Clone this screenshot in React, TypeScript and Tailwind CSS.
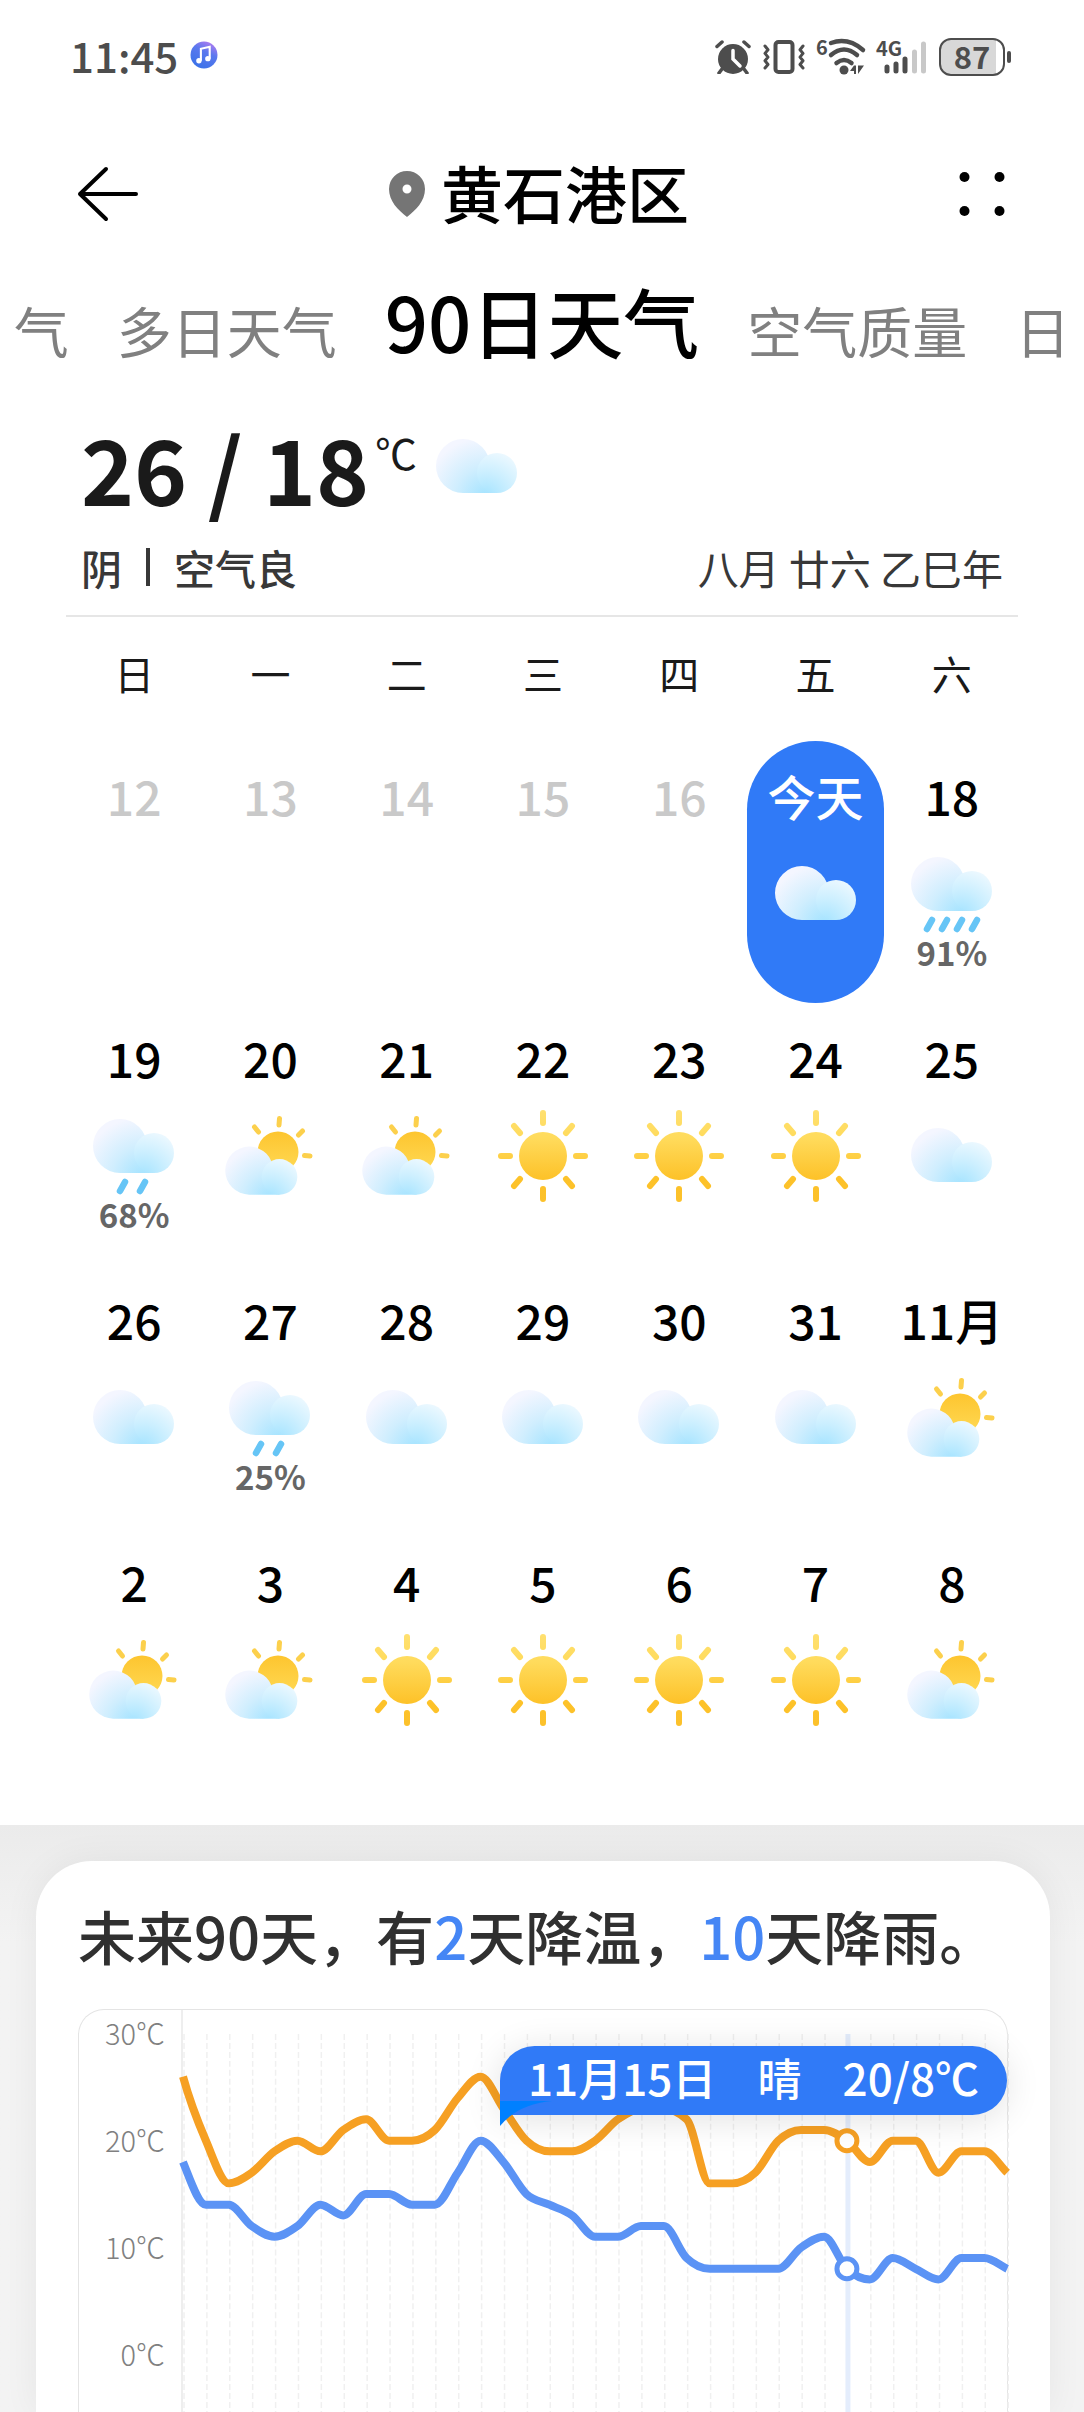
import { useId } from "react";

type Weather = "cloud" | "rain2" | "rain4" | "partly" | "sun";

interface Day {
  label: string;
  weather?: Weather;
  chance?: string;
  today?: boolean;
}

const weekdays = ["日", "一", "二", "三", "四", "五", "六"];

const weeks: Day[][] = [
  [
    { label: "12" },
    { label: "13" },
    { label: "14" },
    { label: "15" },
    { label: "16" },
    { label: "今天", weather: "cloud", today: true },
    { label: "18", weather: "rain4", chance: "91%" },
  ],
  [
    { label: "19", weather: "rain2", chance: "68%" },
    { label: "20", weather: "partly" },
    { label: "21", weather: "partly" },
    { label: "22", weather: "sun" },
    { label: "23", weather: "sun" },
    { label: "24", weather: "sun" },
    { label: "25", weather: "cloud" },
  ],
  [
    { label: "26", weather: "cloud" },
    { label: "27", weather: "rain2", chance: "25%" },
    { label: "28", weather: "cloud" },
    { label: "29", weather: "cloud" },
    { label: "30", weather: "cloud" },
    { label: "31", weather: "cloud" },
    { label: "11月", weather: "partly" },
  ],
  [
    { label: "2", weather: "partly" },
    { label: "3", weather: "partly" },
    { label: "4", weather: "sun" },
    { label: "5", weather: "sun" },
    { label: "6", weather: "sun" },
    { label: "7", weather: "sun" },
    { label: "8", weather: "partly" },
  ],
];

const highs = [
  26, 20, 16, 17, 19, 20, 19, 21, 22, 20, 20, 21, 24, 26, 23, 20, 19, 19, 20, 22, 23, 23, 22, 16, 16, 17, 20, 21, 21,
  20, 18, 20, 20, 17, 19, 19, 17,
];
const lows = [
  18, 14, 14, 12, 11, 12, 14, 13, 15, 15, 14, 14, 17, 20, 18, 15, 14, 13, 11, 11, 12, 12, 9, 8, 8, 8, 8, 10, 11, 8, 7,
  9, 8, 7, 9, 9, 8,
];
const selectedDay = 29;

/* Cloud in a 96-unit box, 81 wide and 54 tall. */
function CloudShape() {
  const id = useId().replace(/[^a-zA-Z0-9]/g, "");
  return (
    <g>
      <defs>
        <radialGradient id={`${id}b`} gradientUnits="userSpaceOnUse" cx="56" cy="80" r="60">
          <stop offset="0" stopColor="#a3e3ff" />
          <stop offset="0.5" stopColor="#d0eefe" />
          <stop offset="1" stopColor="#f4f6ff" />
        </radialGradient>
        <radialGradient id={`${id}s`} gradientUnits="userSpaceOnUse" cx="57" cy="80" r="46">
          <stop offset="0" stopColor="#a3e3ff" />
          <stop offset="0.55" stopColor="#ccefff" />
          <stop offset="1" stopColor="#ebf8ff" />
        </radialGradient>
      </defs>
      <path d="M34 22a27 27 0 0 1 27 27v7h7v20H34a27 27 0 0 1 0-54Z" fill={`url(#${id}b)`} />
      <circle cx="68" cy="56" r="20" fill={`url(#${id}s)`} />
    </g>
  );
}

function SunShape() {
  const id = useId().replace(/[^a-zA-Z0-9]/g, "");
  return (
    <g>
      <defs>
        <linearGradient id={id} gradientUnits="userSpaceOnUse" x1="0" y1="4" x2="0" y2="96">
          <stop offset="0" stopColor="#ffe070" />
          <stop offset="0.3" stopColor="#ffdb5c" />
          <stop offset="0.75" stopColor="#fdc229" />
          <stop offset="1" stopColor="#fcc12b" />
        </linearGradient>
      </defs>
      <circle cx="48" cy="50" r="24" fill={`url(#${id})`} />
      <path
        d="M45 7a3 3 0 0 1 6 0v10a3 3 0 0 1-6 0ZM45 83a3 3 0 0 1 6 0v10a3 3 0 0 1-6 0ZM6 47h9a3 3 0 0 1 0 6H6a3 3 0 0 1 0-6ZM81 47h9a3 3 0 0 1 0 6h-9a3 3 0 0 1 0-6Z"
        fill={`url(#${id})`}
      />
      <path
        d="m19 20 6 7M77 20l-6 7M19 80l6-7M77 80l-6-7"
        fill="none"
        stroke={`url(#${id})`}
        strokeWidth="6"
        strokeLinecap="round"
      />
    </g>
  );
}

function PartlyShape() {
  const id = useId().replace(/[^a-zA-Z0-9]/g, "");
  return (
    <g>
      <defs>
        <linearGradient id={id} x1="0" y1="0" x2="0" y2="1">
          <stop offset="0" stopColor="#fdc52f" />
          <stop offset="1" stopColor="#ffda55" />
        </linearGradient>
      </defs>
      <circle cx="56" cy="46" r="20.500" fill={`url(#${id})`} />
      <path
        d="M57.500 12.500 57 19M32.500 21l4 5M80.500 25l-4 4M82.500 49.500l5.500.5"
        fill="none"
        stroke="#fcd04c"
        strokeWidth="5"
        strokeLinecap="round"
      />
      <g transform="translate(-3 21) scale(.89)">
        <CloudShape />
      </g>
    </g>
  );
}

function WeatherIcon({ kind }: { kind: Weather }) {
  return (
    <svg viewBox="0 0 96 96" className="h-24 w-24" aria-hidden="true">
      {kind === "cloud" && <CloudShape />}
      {kind === "sun" && <SunShape />}
      {kind === "partly" && <PartlyShape />}
      {(kind === "rain2" || kind === "rain4") && (
        <g>
          <g transform="translate(0 -9)">
            <CloudShape />
          </g>
          <path
            d={kind === "rain2" ? "m39 76-5 9M59 76l-5 9" : "m28 76-5 9M43 76l-5 9M58 76l-5 9M73 76l-5 9"}
            fill="none"
            stroke="#66c5f6"
            strokeWidth="6.500"
            strokeLinecap="round"
          />
        </g>
      )}
    </svg>
  );
}

function StatusBar() {
  return (
    <div className="flex h-[114px] items-center justify-between pl-[70px] pr-[73px] text-[#4d4d4d]">
      <div className="flex items-center gap-3 pb-1">
        <span className="text-[42px] font-medium leading-none">11:45</span>
        <svg viewBox="0 0 27 27" className="h-7 w-7" aria-hidden="true">
          <defs>
            <linearGradient id="music" x1="0.800" y1="0" x2="0.300" y2="1">
              <stop offset="0" stopColor="#b57cf0" />
              <stop offset="0.400" stopColor="#5a78ee" />
              <stop offset="1" stopColor="#3a72e8" />
            </linearGradient>
          </defs>
          <circle cx="13.500" cy="13.500" r="13" fill="url(#music)" />
          <path d="M10.500 19V7.500l8.500-2V17" fill="none" stroke="#fff" strokeWidth="2" />
          <circle cx="8.600" cy="19" r="2.600" fill="#fff" />
          <circle cx="17.200" cy="17" r="2.600" fill="#fff" />
        </svg>
      </div>
      <div className="flex items-center gap-3">
        <svg viewBox="0 0 36 34" className="h-[34px] w-9" fill="none" stroke="currentColor" strokeLinecap="round" aria-hidden="true">
          <circle cx="18" cy="19" r="15" fill="currentColor" stroke="none" />
          <path d="M2 6.500 7 2M34 6.500 29 2M7 29l-3 4M29 29l3 4" strokeWidth="3.500" />
          <path d="M18 10.500V19l7 7" stroke="#fff" strokeWidth="3.500" />
        </svg>
        <svg viewBox="0 0 42 34" className="h-[34px] w-[42px]" fill="none" stroke="currentColor" strokeLinecap="round" strokeLinejoin="round" aria-hidden="true">
          <rect x="12.500" y="2" width="17" height="30" rx="3" strokeWidth="4" />
          <path d="m2 6 3 3.700-3 3.700 3 3.700-3 3.700 3 3.700-3 3.500M40 6l-3 3.700 3 3.700-3 3.700 3 3.700-3 3.700 3 3.500" strokeWidth="3" />
        </svg>
        <svg viewBox="0 0 48 36" className="h-9 w-12 overflow-visible" fill="none" stroke="currentColor" strokeLinecap="round" aria-hidden="true">
          <text x="-1" y="16" fontSize="20" fontWeight="700" fill="currentColor" stroke="none">
            6
          </text>
          <path d="M14 4q17-6 32 7M14 16q13-11 26 0M19.500 24q7.500-6 15 0" strokeWidth="4.500" />
          <circle cx="27" cy="31" r="4.500" fill="currentColor" stroke="none" />
          <path d="M33 32h4v-5.500ZM37 26.500h2V35h-2ZM41 26.500V35l6-8.500Z" fill="currentColor" stroke="none" />
        </svg>
        <svg viewBox="0 0 50 36" className="h-9 w-[50px] overflow-visible" fill="none" strokeWidth="5" strokeLinecap="round" aria-hidden="true">
          <text x="-1" y="17" fontSize="20" fontWeight="700" fill="currentColor">
            4G
          </text>
          <path d="M10 28v4M19 25v7M28 20v12" stroke="currentColor" />
          <path d="M37.500 13v19M46.500 5v27" stroke="#c8c8c8" />
        </svg>
        <div className="flex items-center gap-0.5">
          <div className="flex h-[38px] w-[66px] items-center justify-center rounded-xl border-2 border-current bg-linear-to-r from-[#d8d8d8] from-88% to-white to-88% pb-1 text-[31px] font-bold leading-none">
            87
          </div>
          <div className="h-3 w-1 rounded bg-current" />
        </div>
      </div>
    </div>
  );
}

function Header() {
  return (
    <header className="flex h-40 items-center justify-between pl-[76px] pr-[74px]">
      <button type="button" aria-label="返回" className="flex w-20 justify-start">
        <svg viewBox="0 0 64 56" className="h-14 w-16" fill="none" stroke="#000" strokeWidth="4" strokeLinecap="round" strokeLinejoin="round">
          <path d="M30 3 4 28l26 25M4 28h56" />
        </svg>
      </button>
      <h1 className="flex items-center gap-4 text-[62px] font-medium leading-none text-black">
        <svg viewBox="0 0 36 46" className="h-[46px] w-9" aria-hidden="true">
          <path fill="#757575" fillRule="evenodd" d="M18 0a18 18 0 0 1 18 18c0 12-9 21-18 28C9 39 0 30 0 18A18 18 0 0 1 18 0Zm0 13.500a4.500 4.500 0 1 0 0 9 4.500 4.500 0 0 0 0-9Z" />
        </svg>
        <span className="pb-1">黄石港区</span>
      </h1>
      <button type="button" aria-label="更多" className="flex w-22 justify-end">
        <svg viewBox="0 0 56 56" className="h-14 w-14">
          <circle cx="10.500" cy="11" r="5" />
          <circle cx="45.500" cy="11" r="5" />
          <circle cx="10.500" cy="45" r="5" />
          <circle cx="45.500" cy="45" r="5" />
        </svg>
      </button>
    </header>
  );
}

function Tabs() {
  const tab = "shrink-0 text-[55px] font-normal text-[#808080]";
  return (
    <nav className="-mt-2.5 flex items-baseline justify-center gap-12 whitespace-nowrap leading-[112px]">
      <button type="button" className={tab}>气</button>
      <button type="button" className={tab}>多日天气</button>
      <button type="button" aria-current="page" className="shrink-0 text-[76px] font-medium text-black">
        90日天气
      </button>
      <button type="button" className={tab}>空气质量</button>
      <button type="button" className={tab}>日</button>
    </nav>
  );
}

function Summary() {
  return (
    <section className="mx-[66px] mt-8 border-b-2 border-[#e6e6e6] px-[15px] pb-[18px]">
      <div className="flex items-start text-[#1a1a1a]">
        <span className="text-[90px] font-bold leading-[100px]">26 / 18</span>
        <span className="ml-1.5 text-[42px] leading-[70px]">℃</span>
        <div className="ml-3">
          <WeatherIcon kind="cloud" />
        </div>
      </div>
      <div className="mt-5 flex items-center justify-between text-[41px] leading-[60px] text-[#383838]">
        <div className="flex items-center font-medium">
          阴
          <span className="mx-6 h-[38px] w-1 bg-current" />
          空气良
        </div>
        <span>八月 廿六 乙巳年</span>
      </div>
    </section>
  );
}

function DayCell({ day }: { day: Day }) {
  const tone = day.today ? "text-white" : day.weather ? "text-black" : "text-[#c9c9c9]";
  return (
    <button
      type="button"
      className={`flex h-[262px] w-full flex-col items-center rounded-full pt-[22px] ${day.today ? "bg-[#307af7]" : ""}`}
    >
      <span className={`mb-[17px] whitespace-nowrap text-[48px] font-medium leading-[64px] ${tone}`}>{day.label}</span>
      {day.weather && <WeatherIcon kind={day.weather} />}
      {day.chance && <span className="-mt-1 text-[33px] font-bold leading-8 text-[#666]">{day.chance}</span>}
    </button>
  );
}

function Calendar() {
  return (
    <div className="pb-9 pl-[66px] pr-16">
      <table className="w-full table-fixed">
        <thead>
          <tr>
            {weekdays.map((name) => (
              <th key={name} scope="col" className="px-0 pb-[38px] pt-[26px] text-[40px] font-normal leading-[60px] text-[#1a1a1a]">
                {name}
              </th>
            ))}
          </tr>
        </thead>
        <tbody>
          {weeks.map((week) => (
            <tr key={week[0].label}>
              {week.map((day) => (
                <td key={day.label} className="p-0 align-top">
                  <DayCell day={day} />
                </td>
              ))}
            </tr>
          ))}
        </tbody>
      </table>
    </div>
  );
}

const stepX = 22.95;
const toX = (i: number) => i * stepX;
const toY = (t: number) => 24 + (30 - t) * 10.7;

/* Monotone cubic curve, so that flat runs stay flat between equal readings. */
function curve(values: number[]): string {
  const ys = values.map(toY);
  const slopes = ys.slice(1).map((y, i) => (y - ys[i]) / stepX);
  const tangents = ys.map((_, i) => {
    if (i === 0) return slopes[0] * 1.3;
    if (i === ys.length - 1) return slopes[i - 1];
    const a = slopes[i - 1];
    const b = slopes[i];
    if (a * b <= 0) return 0;
    return Math.sign(a) * Math.min(Math.abs(a), Math.abs(b), Math.abs(a + b) / 4) * 2;
  });
  let d = `M${toX(0)} ${ys[0]}`;
  for (let i = 1; i < ys.length; i++) {
    const h = stepX / 3;
    d += `C${toX(i - 1) + h} ${ys[i - 1] + tangents[i - 1] * h} ${toX(i) - h} ${ys[i] - tangents[i] * h} ${toX(i)} ${ys[i]}`;
  }
  return d;
}

function TemperatureChart() {
  return (
    <figure className="relative flex rounded-t-[26px] border border-b-0 border-[#e4e4e4]">
      <div className="flex w-[104px] shrink-0 flex-col gap-[67px] border-r-2 border-[#eee] pr-4 pt-0.5 text-right text-[29px] font-light leading-10 text-[#808080]">
        <span>30℃</span>
        <span>20℃</span>
        <span>10℃</span>
        <span>0℃</span>
      </div>
      <svg viewBox="0 0 826 404" className="min-w-0 flex-1 overflow-visible" role="img" aria-label="未来90天气温">
        {highs.map((_, i) => (
          <path key={i} d={`M${toX(i) + 1} 24V404`} stroke="#f0f0f0" strokeWidth="1.500" strokeDasharray="6 3" />
        ))}
        <path d={`M${toX(selectedDay) + 1} 24V404`} stroke="#e4edfc" strokeWidth="5" />
        <path d={curve(highs)} fill="none" stroke="#f6a023" strokeWidth="8" />
        <path d={curve(lows)} fill="none" stroke="#5b93f5" strokeWidth="8" />
        <circle cx={toX(selectedDay)} cy={toY(highs[selectedDay])} r="10" fill="#fff" stroke="#f6a023" strokeWidth="5" />
        <circle cx={toX(selectedDay)} cy={toY(lows[selectedDay])} r="10" fill="#fff" stroke="#5b93f5" strokeWidth="5" />
      </svg>
      <figcaption className="absolute right-0 top-9 flex h-[69px] w-[507px] items-center justify-between rounded-full rounded-bl-none bg-[#307af7] px-7 pb-2 text-[44px] font-medium leading-none text-white shadow-[0_4px_36px_rgba(0,0,0,0.12)]">
        <span>11月15日</span>
        <span>晴</span>
        <span>20/8℃</span>
        <svg viewBox="0 0 52 25" className="absolute left-0 top-[55px] h-[25px] w-[52px]" aria-hidden="true">
          <path d="M0 0h52Q18 3 0 25Z" fill="#0080ff" />
        </svg>
      </figcaption>
    </figure>
  );
}

export default function App() {
  return (
    <div className="min-h-screen overflow-hidden bg-[#f3f3f3] font-['Noto_Sans_CJK_SC',sans-serif]">
      <main className="bg-white">
        <StatusBar />
        <Header />
        <Tabs />
        <Summary />
        <Calendar />
      </main>
      <section className="bg-linear-to-b from-[#ebebeb] to-[#f3f3f3] to-20% pl-9 pr-[34px] pt-9">
        <div className="rounded-t-[56px] bg-white px-[42px] shadow-[0_0_36px_rgba(0,0,0,0.06)]">
          <h2 className="pb-9 pt-9 text-[58px] font-medium leading-[76px] text-[#303030]">
            未来90天，有<span className="text-[#4586f5]">2</span>天降温，<span className="text-[#4586f5]">10</span>天降雨。
          </h2>
          <TemperatureChart />
        </div>
      </section>
    </div>
  );
}
